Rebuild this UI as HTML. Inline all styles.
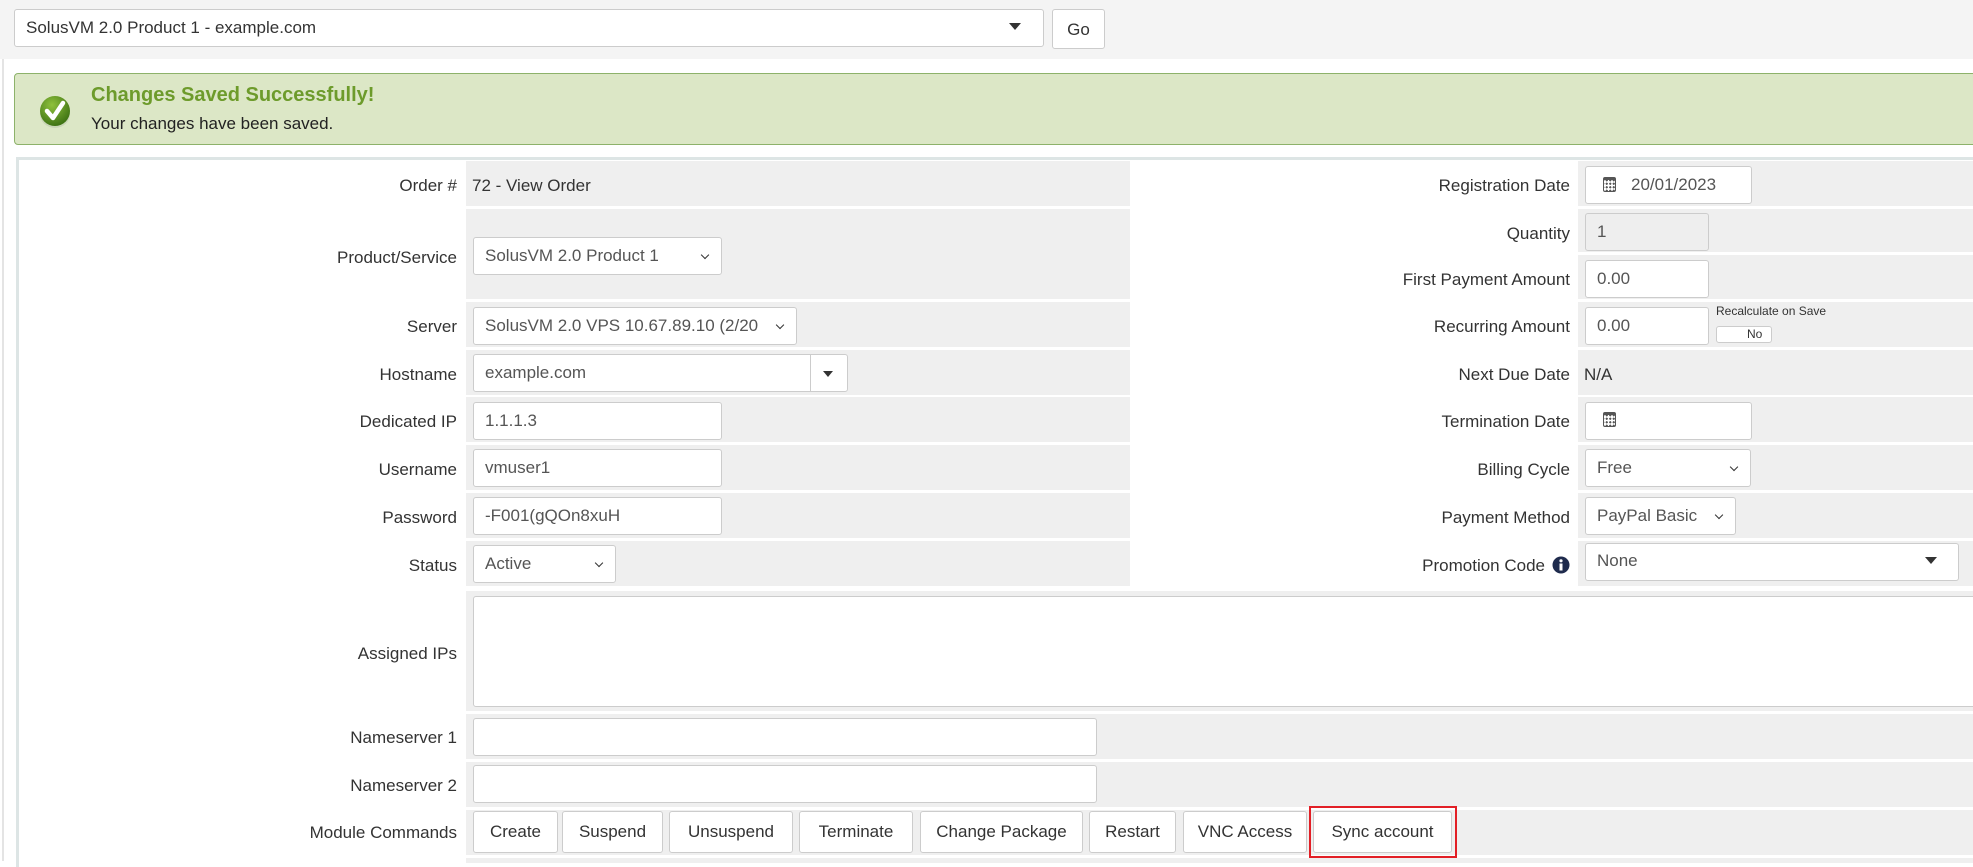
<!DOCTYPE html>
<html><head><meta charset="utf-8"><style>
*{box-sizing:border-box;margin:0;padding:0}
body{width:1973px;height:861px;overflow:hidden;background:#fff;font-family:"Liberation Sans",sans-serif;color:#333;font-size:17px;position:relative}
.a{position:absolute}
.top{left:0;top:0;width:1973px;height:59px;background:#f4f4f4}
.inp{position:absolute;background:#fff;border:1px solid #ccc;border-radius:3px;height:38px;line-height:36px;padding-left:11px;color:#555;font-size:17px;white-space:nowrap;overflow:hidden}
.sel::after{content:"";position:absolute;right:13px;top:14px;width:5px;height:5px;border-right:1.5px solid #333;border-bottom:1.5px solid #333;transform:rotate(45deg)}
.lbl{position:absolute;text-align:right;font-size:17px;color:#333;white-space:nowrap}
.cell{position:absolute;background:#efefef}
.btn{position:absolute;top:811px;height:42px;background:#fff;border:1px solid #ccc;border-radius:3px;line-height:40px;text-align:center;font-size:17px;color:#333}
.tri{position:absolute;width:0;height:0;border-left:6px solid transparent;border-right:6px solid transparent;border-top:7px solid #333}
.cal{position:absolute;width:13px;height:15px;border:1.5px solid #555;border-radius:2px;border-top-width:3px;background:radial-gradient(circle,#555 1px,transparent 1.2px) 1px 2px/3.5px 3.5px}
</style></head><body>
<div class="a top"></div>
<div class="a" style="left:2px;top:59px;width:2px;height:802px;background:#e4e4e4"></div>
<div class="inp" style="left:14px;top:9px;width:1030px;height:38px;color:#333;font-size:17px">SolusVM 2.0 Product 1 - example.com</div>
<div class="tri" style="left:1009px;top:23px"></div>
<div class="inp" style="left:1052px;top:9px;width:53px;height:40px;padding:0;text-align:center;line-height:40px;color:#333">Go</div>

<div class="a" style="left:14px;top:73px;width:1970px;height:72px;background:#dce7c6;border:1px solid #8db26a;border-radius:4px"></div>
<svg class="a" style="left:38px;top:94px" width="34" height="36" viewBox="0 0 34 36"><defs><radialGradient id="g" cx="40%" cy="30%" r="70%"><stop offset="0" stop-color="#8fc13c"/><stop offset="1" stop-color="#3f7414"/></radialGradient></defs><ellipse cx="17" cy="20" rx="15" ry="14" fill="#c9d6b6"/><circle cx="17" cy="17" r="15" fill="url(#g)"/><path d="M9 17 L15 24 L25 9" stroke="#fff" stroke-width="4.5" fill="none" stroke-linecap="round" stroke-linejoin="round"/></svg>
<div class="a" style="left:91px;top:84px;font-size:20px;color:#6d9b2b;font-weight:bold">Changes Saved Successfully!</div>
<div class="a" style="left:91px;top:114px;font-size:17px;color:#222">Your changes have been saved.</div>

<div class="a" style="left:16px;top:157px;width:1960px;height:710px;border:3px solid #dde5e5;border-right:none;border-bottom:none;background:#fff"></div>

<div class="cell" style="left:466px;top:161px;width:664px;height:45px"></div>
<div class="cell" style="left:466px;top:209px;width:664px;height:90px"></div>
<div class="cell" style="left:466px;top:302px;width:664px;height:45px"></div>
<div class="cell" style="left:466px;top:350px;width:664px;height:45px"></div>
<div class="cell" style="left:466px;top:397px;width:664px;height:45px"></div>
<div class="cell" style="left:466px;top:445px;width:664px;height:45px"></div>
<div class="cell" style="left:466px;top:493px;width:664px;height:45px"></div>
<div class="cell" style="left:466px;top:541px;width:664px;height:45px"></div>
<div class="cell" style="left:466px;top:591px;width:1510px;height:120px"></div>
<div class="cell" style="left:466px;top:714px;width:1510px;height:45px"></div>
<div class="cell" style="left:466px;top:762px;width:1510px;height:45px"></div>
<div class="cell" style="left:466px;top:810px;width:1510px;height:45px"></div>
<div class="cell" style="left:466px;top:858px;width:1510px;height:5px"></div>
<div class="cell" style="left:1578px;top:161px;width:400px;height:45px"></div>
<div class="cell" style="left:1578px;top:209px;width:400px;height:43px"></div>
<div class="cell" style="left:1578px;top:255px;width:400px;height:44px"></div>
<div class="cell" style="left:1578px;top:302px;width:400px;height:45px"></div>
<div class="cell" style="left:1578px;top:350px;width:400px;height:45px"></div>
<div class="cell" style="left:1578px;top:397px;width:400px;height:45px"></div>
<div class="cell" style="left:1578px;top:445px;width:400px;height:45px"></div>
<div class="cell" style="left:1578px;top:493px;width:400px;height:45px"></div>
<div class="cell" style="left:1578px;top:541px;width:400px;height:45px"></div>

<div class="lbl" style="right:1516px;top:176px">Order #</div>
<div class="a" style="left:472px;top:176px">72 - View Order</div>
<div class="lbl" style="right:1516px;top:248px">Product/Service</div>
<div class="inp sel" style="left:473px;top:237px;width:249px">SolusVM 2.0 Product 1</div>
<div class="lbl" style="right:1516px;top:317px">Server</div>
<div class="inp sel" style="left:473px;top:307px;width:324px">SolusVM 2.0 VPS 10.67.89.10 (2/20</div>
<div class="lbl" style="right:1516px;top:365px">Hostname</div>
<div class="inp" style="left:473px;top:354px;width:375px">example.com</div>
<div class="a" style="left:810px;top:355px;width:1px;height:36px;background:#ccc"></div>
<div class="tri" style="left:823px;top:371px;border-top-width:6px;border-left-width:5px;border-right-width:5px"></div>
<div class="lbl" style="right:1516px;top:412px">Dedicated IP</div>
<div class="inp" style="left:473px;top:402px;width:249px">1.1.1.3</div>
<div class="lbl" style="right:1516px;top:460px">Username</div>
<div class="inp" style="left:473px;top:449px;width:249px">vmuser1</div>
<div class="lbl" style="right:1516px;top:508px">Password</div>
<div class="inp" style="left:473px;top:497px;width:249px">-F001(gQOn8xuH</div>
<div class="lbl" style="right:1516px;top:556px">Status</div>
<div class="inp sel" style="left:473px;top:545px;width:143px">Active</div>
<div class="lbl" style="right:1516px;top:644px">Assigned IPs</div>
<div class="inp" style="left:473px;top:596px;width:1510px;height:111px"></div>
<div class="lbl" style="right:1516px;top:728px">Nameserver 1</div>
<div class="inp" style="left:473px;top:718px;width:624px"></div>
<div class="lbl" style="right:1516px;top:776px">Nameserver 2</div>
<div class="inp" style="left:473px;top:765px;width:624px"></div>
<div class="lbl" style="right:1516px;top:823px">Module Commands</div>
<div class="btn" style="left:473px;width:85px">Create</div>
<div class="btn" style="left:562px;width:101px">Suspend</div>
<div class="btn" style="left:669px;width:124px">Unsuspend</div>
<div class="btn" style="left:799px;width:114px">Terminate</div>
<div class="btn" style="left:920px;width:163px">Change Package</div>
<div class="btn" style="left:1089px;width:87px">Restart</div>
<div class="btn" style="left:1183px;width:124px">VNC Access</div>
<div class="btn" style="left:1313px;width:139px">Sync account</div>
<div class="a" style="left:1309px;top:806px;width:148px;height:52px;border:2px solid #e21f26"></div>

<div class="lbl" style="right:403px;top:176px">Registration Date</div>
<div class="inp" style="left:1585px;top:166px;width:167px;padding-left:45px">20/01/2023</div>
<div class="cal" style="left:1603px;top:177px"></div>
<div class="lbl" style="right:403px;top:224px">Quantity</div>
<div class="inp" style="left:1585px;top:213px;width:124px;background:#eee">1</div>
<div class="lbl" style="right:403px;top:270px">First Payment Amount</div>
<div class="inp" style="left:1585px;top:260px;width:124px">0.00</div>
<div class="lbl" style="right:403px;top:317px">Recurring Amount</div>
<div class="inp" style="left:1585px;top:307px;width:124px">0.00</div>
<div class="a" style="left:1716px;top:304px;font-size:12px;color:#333">Recalculate on Save</div>
<div class="a" style="left:1716px;top:326px;width:56px;height:17px;border:1px solid #ccc;border-radius:3px;background:#fff;font-size:12px;line-height:15px;padding-left:30px">No</div>
<div class="lbl" style="right:403px;top:365px">Next Due Date</div>
<div class="a" style="left:1584px;top:365px">N/A</div>
<div class="lbl" style="right:403px;top:412px">Termination Date</div>
<div class="inp" style="left:1585px;top:402px;width:167px"></div>
<div class="cal" style="left:1603px;top:412px"></div>
<div class="lbl" style="right:403px;top:460px">Billing Cycle</div>
<div class="inp sel" style="left:1585px;top:449px;width:166px">Free</div>
<div class="lbl" style="right:428px;top:556px">Promotion Code</div>
<div class="lbl" style="right:403px;top:508px">Payment Method</div>
<div class="inp sel" style="left:1585px;top:497px;width:151px">PayPal Basic</div>
<svg class="a" style="left:1552px;top:556px" width="18" height="18"><circle cx="9" cy="9" r="8.5" fill="#1f2b4d"/><rect x="7.5" y="7.5" width="3" height="7" fill="#fff"/><circle cx="9" cy="4.8" r="1.6" fill="#fff"/></svg>
<div class="inp" style="left:1585px;top:543px;width:374px;line-height:34px">None</div>
<div class="tri" style="left:1925px;top:557px"></div>
</body></html>
